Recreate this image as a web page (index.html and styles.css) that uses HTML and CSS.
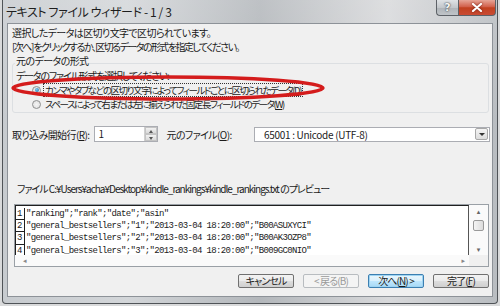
FILE: index.html
```html
<!DOCTYPE html>
<html lang="ja">
<head>
<meta charset="utf-8">
<link rel="stylesheet" href="styles.css">
</head>
<body>
<div class="window">
  <div class="titlebar">
    <span class="title">テキスト ファイル ウィザード - 1 / 3</span>
    <div class="caption-buttons">
      <span class="cap help">?</span>
      <span class="cap close"><svg width="12" height="9" viewBox="0 0 12 9"><path d="M2 1 L10 8 M10 1 L2 8" stroke="#fff" stroke-width="2.2" stroke-linecap="round"/></svg></span>
    </div>
  </div>
  <div class="client">
    <div class="intro">
      <div class="line1">選択したデータは区切り文字で区切られています。</div>
      <div class="line2">[次へ] をクリックするか、区切るデータの形式を指定してください。</div>
    </div>
    <fieldset class="group">
      <legend>元のデータの形式</legend>
      <div class="group-hint">データのファイル形式を選択してください:</div>
      <div class="radio-row"><span class="radio checked"></span><span class="radio-label focused">カンマやタブなどの区切り文字によってフィールドごとに区切られたデータ(<u>D</u>)</span></div>
      <div class="radio-row"><span class="radio"></span><span class="radio-label">スペースによって右または左に揃えられた固定長フィールドのデータ(<u>W</u>)</span></div>
    </fieldset>
    <div class="start-row">
      <span class="lbl">取り込み開始行(<u>R</u>):</span>
      <div class="spin"><span class="spin-val">1</span><span class="spin-btns"><span class="sb up"></span><span class="sb down"></span></span></div>
      <span class="lbl origin">元のファイル(<u>O</u>):</span>
      <div class="combo"><span class="combo-val">65001 : Unicode (UTF-8)</span><span class="combo-btn"></span></div>
    </div>
    <div class="preview-label">ファイル C:¥Users¥acha¥Desktop¥kindle_rankings¥kindle_rankings.txt のプレビュー</div>
    <div class="preview">
      <div class="grid">
        <div class="row"><span class="num">1</span><span class="data">"ranking";"rank";"date";"asin"</span></div>
        <div class="row"><span class="num">2</span><span class="data">"general_bestsellers";"1";"2013-03-04 18:20:00";"B00ASUXYCI"</span></div>
        <div class="row"><span class="num">3</span><span class="data">"general_bestsellers";"2";"2013-03-04 18:20:00";"B00AK3OZP8"</span></div>
        <div class="row"><span class="num">4</span><span class="data">"general_bestsellers";"3";"2013-03-04 18:20:00";"B009GC0NIO"</span></div>
      </div>
      <div class="vscroll"><span class="arr">▴</span><span class="thumb"></span><span class="arr">▾</span></div>
      <div class="hscroll"><span class="arr">◂</span><span class="arr">▸</span></div>
      <div class="corner"></div>
    </div>
    <div class="buttons">
      <span class="btn">キャンセル</span>
      <span class="btn disabled">&lt; 戻る(B)</span>
      <span class="btn default">次へ(<u>N</u>) &gt;</span>
      <span class="btn">完了(<u>F</u>)</span>
    </div>
  </div>
  <svg class="annotation" width="500" height="306" viewBox="0 0 500 306"><ellipse cx="167" cy="88" rx="155" ry="11" fill="none" stroke="#d41c1c" stroke-width="3.5"/></svg>
</div>
</body>
</html>
```

FILE: styles.css
```css
* { box-sizing: border-box; }
html, body { margin: 0; padding: 0; }
body {
  width: 500px;
  height: 306px;
  background: #d9dadb;
  overflow: hidden;
  font-family: "Noto Sans CJK JP", sans-serif;
  font-feature-settings: "palt";
  font-size: 10px;
  letter-spacing: -0.6px;
  color: #1b1b1b;
}
u { text-decoration: underline; text-underline-offset: 1px; }
.window {
  position: relative;
  margin: 0 2px;
  height: 304px;
  border: 1px solid #505458;
  border-top: none;
  border-radius: 0 0 4px 4px;
  background:
    linear-gradient(to bottom, rgba(255,255,255,0.15), rgba(0,0,0,0) 40%),
    linear-gradient(to right, #c7cbcf 0%, #d3d6d9 25%, #b3b7bb 52%, #d8d9db 78%, #b9bdc1 100%);
  display: flex;
  flex-direction: column;
}
.titlebar {
  height: 23px;
  display: flex;
  align-items: flex-start;
}
.title {
  margin: 4px 0 0 3px;
  font-size: 12px;
  line-height: 16px;
  letter-spacing: -0.4px;
  color: #1e1e1e;
}
.caption-buttons {
  margin-left: auto;
  margin-right: 1px;
  display: flex;
  height: 16px;
}
.cap {
  display: flex;
  align-items: center;
  justify-content: center;
  height: 16px;
  border: 1px solid #5d6167;
  border-top: none;
}
.help {
  width: 22px;
  border-right: none;
  border-radius: 0 0 0 4px;
  background: linear-gradient(to bottom, #dfe2e5, #c3c7cb 50%, #aeb3b8 51%, #c0c4c8);
  color: #f4f4f4;
  font-family: "DejaVu Sans", sans-serif;
  font-weight: bold;
  font-size: 11px;
  letter-spacing: 0;
  text-shadow: 0 0 2px #40464d, 0 0 1px #40464d;
}
.close {
  width: 38px;
  border-radius: 0 0 4px 0;
  background: linear-gradient(to bottom, #e6a597, #d2604b 45%, #c1401f 52%, #c94b34);
}
.close svg { filter: drop-shadow(0 0 1px #6e1a10); }
.client {
  margin: 0 4px;
  height: 274px;
  border: 1px solid #8d9298;
  background: #f0f0f0;
  padding: 2px 2px 0 4px;
  display: flex;
  flex-direction: column;
}
.intro { line-height: 14px; }
.intro .line2 { letter-spacing: -1.55px; }
.group {
  margin: 0 1px 0 0;
  padding: 0 2px 1px 3px;
  border: 1px solid #dcdfe2;
  border-radius: 3px;
  line-height: 14px;
}
.group legend {
  padding: 0 1px 4px;
  margin-left: -1px;
  line-height: 14px;
}
.group-hint { margin-top: -3px; letter-spacing: -1.2px; }
.radio-row {
  display: flex;
  align-items: center;
  height: 14px;
  padding-left: 16px;
}
.radio {
  width: 9px;
  height: 9px;
  border-radius: 50%;
  border: 1px solid #8e8f8f;
  background: radial-gradient(circle, #f4f4f4, #dcdcdc);
  margin-right: 2px;
  position: relative;
  flex: none;
}
.radio.checked::after {
  content: "";
  position: absolute;
  left: 1.5px;
  top: 1.5px;
  width: 4px;
  height: 4px;
  border-radius: 50%;
  background: radial-gradient(circle at 40% 35%, #7fc6f0, #1b6fa8);
}
.radio-label {
  padding: 0 1px;
  line-height: 12px;
  border: 1px solid transparent;
  font-size: 9.5px;
  letter-spacing: -1.45px;
}
.radio-label.focused { border: 1px dotted #333; }
.start-row {
  display: flex;
  align-items: center;
  height: 16px;
  margin-top: 13px;
}
.spin {
  margin-left: 5px;
  width: 64px;
  height: 16px;
  border: 1px solid #abadb3;
  background: #fff;
  display: flex;
}
.spin-val { padding-left: 3px; line-height: 14px; flex: 1; }
.spin-btns { width: 13px; display: flex; flex-direction: column; border-left: 1px solid #d0d0d0; }
.sb { flex: 1; position: relative; background: linear-gradient(#f2f2f2, #dadada); border: 1px solid #c4c4c4; }
.sb::after {
  content: "";
  position: absolute;
  left: 3px;
  top: 2px;
  border-left: 2.5px solid transparent;
  border-right: 2.5px solid transparent;
}
.sb.up::after { border-bottom: 3px solid #555; }
.sb.down::after { border-top: 3px solid #555; top: 2px; }
.origin { margin-left: 8px; }
.combo {
  margin-left: auto;
  width: 236px;
  height: 15px;
  border: 1px solid #abadb3;
  background: #fff;
  display: flex;
  align-items: center;
}
.combo-val { flex: 1; padding-left: 9px; line-height: 13px; letter-spacing: -0.3px; }
.combo-btn {
  width: 13px;
  height: 12px;
  margin-right: 1px;
  border: 1px solid #a8a8a8;
  border-radius: 2px;
  background: linear-gradient(#f4f4f4, #dcdcdc);
  position: relative;
}
.combo-btn::after {
  content: "";
  position: absolute;
  left: 3px;
  top: 4px;
  border-left: 3px solid transparent;
  border-right: 3px solid transparent;
  border-top: 3px solid #333;
}
.preview-label {
  margin-top: 40px;
  margin-left: 5px;
  line-height: 14px;
  letter-spacing: -1.0px;
}
.preview {
  margin: 8px 1px 0 2px;
  height: 63px;
  border: 1px solid #9aa0a6;
  background: #fff;
  display: grid;
  grid-template-columns: 1fr 19px;
  grid-template-rows: 1fr 11px;
}
.grid {
  border-top: 1px solid #202020;
  border-left: 1px solid #202020;
  border-right: 1px solid #555;
  padding-top: 1.5px;
  overflow: hidden;
  font-family: "Liberation Mono", monospace;
  font-size: 9px;
  letter-spacing: -0.65px;
  font-feature-settings: normal;
}
.row { display: flex; height: 12.4px; line-height: 13.4px; }
.num {
  width: 9px;
  padding-left: 1px;
  border-right: 1px solid #202020;
  border-bottom: 1px solid #202020;
}
.data { padding-left: 1px; white-space: pre; }
.vscroll {
  display: flex;
  flex-direction: column;
  align-items: center;
  background: #fafafa;
  font-size: 7px;
  line-height: 8px;
  color: #666;
  letter-spacing: 0;
  font-family: "DejaVu Sans", sans-serif;
  padding: 3px 0 1px;
}
.vscroll .thumb {
  width: 11px;
  height: 11px;
  border: 1px solid #999;
  border-radius: 2px;
  background: linear-gradient(to right, #f4f4f4, #dcdcdc);
  margin: 4px 0 auto;
}
.hscroll {
  display: flex;
  justify-content: space-between;
  align-items: center;
  padding: 0 4px 0 8px;
  background: #fafafa;
  font-size: 7px;
  color: #888;
  letter-spacing: 0;
  font-family: "DejaVu Sans", sans-serif;
}
.corner { background: #f0f0f0; }
.buttons {
  display: flex;
  justify-content: flex-end;
  gap: 9px;
  margin-top: 7px;
  margin-right: 1px;
}
.btn {
  width: 56px;
  height: 14px;
  border: 1px solid #707070;
  border-radius: 2px;
  background: linear-gradient(to bottom, #f3f3f3 0%, #ebebeb 48%, #dddddd 52%, #cfcfcf 100%);
  display: flex;
  align-items: center;
  justify-content: center;
  line-height: 12px;
  letter-spacing: -0.9px;
}
.btn.disabled {
  border-color: #b8bcc0;
  background: #f4f4f4;
  color: #9a9a9a;
}
.btn.default {
  border-color: #3c7fb1;
  box-shadow: inset 0 0 0 1px #9fd4f2;
  background: linear-gradient(to bottom, #eaf6fd 0%, #d9f0fc 48%, #bee6fd 52%, #a7d9f5 100%);
}
.annotation {
  position: absolute;
  left: -2px;
  top: 0;
  pointer-events: none;
}
```
